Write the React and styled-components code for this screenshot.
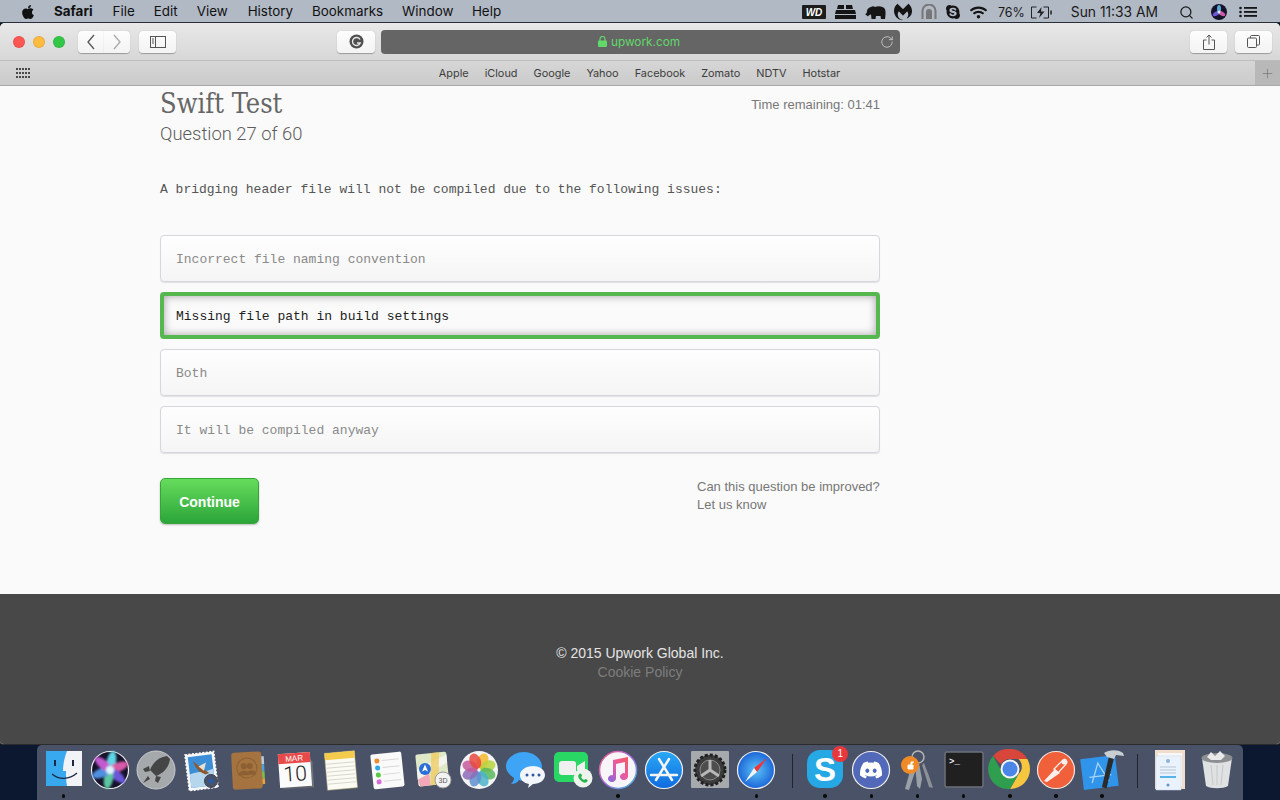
import React from 'react'
import styled, { createGlobalStyle } from 'styled-components'
import { FaApple, FaSkype, FaDiscord, FaWifi } from 'react-icons/fa'
import { SiMalwarebytes } from 'react-icons/si'
import { Search, RotateCw, Plus } from 'lucide-react'

const GlobalStyle = createGlobalStyle`
  html, body { margin: 0; padding: 0; height: 800px; overflow: hidden; background: #0c1830; }
  * { box-sizing: border-box; }
`

const Screen = styled.div`
  width: 1280px;
  height: 800px;
  display: flex;
  flex-direction: column;
  background: #0c1830;
  font-family: "Liberation Sans", Arial, sans-serif;
`

const MenuBar = styled.div`
  height: 23px;
  flex: none;
  display: flex;
  align-items: center;
  padding: 2px 23px 0 20px;
  background: #b1b9c5;
  border-bottom: 1px solid #2a2e38;
  color: #111;
  font-family: Inter, "Liberation Sans", sans-serif;
  font-size: 13.4px;
`

const MenuItem = styled.span`
  margin-left: ${p => p.$gap}px;
  font-weight: ${p => (p.$bold ? 700 : 400)};
  line-height: 1;
`

const MenuSpacer = styled.div`
  flex: 1;
`

const StatusIcons = styled.div`
  display: flex;
  align-items: center;
  gap: 8.6px;
  color: #141414;
`

const StatusItem = styled.span`
  display: flex;
  align-items: center;
  margin-left: ${p => p.$gap}px;
  color: #1a1a1a;
  font-size: ${p => p.$size || 13}px;
`

const Window = styled.div`
  height: 722px;
  flex: none;
  display: flex;
  flex-direction: column;
  border-radius: 5px 5px 4px 4px;
  overflow: hidden;
  border-bottom: 1px solid #2c2c2c;
  background: #fafafa;
`

const Toolbar = styled.div`
  height: 38px;
  flex: none;
  display: flex;
  align-items: center;
  padding: 0 8px 0 13px;
  background: linear-gradient(#e8e8e8, #d7d7d7);
  border-bottom: 1px solid #bdbdbd;
`

const Light = styled.span`
  width: 12px;
  height: 12px;
  margin-right: 8px;
  border-radius: 50%;
  background: ${p => p.$color};
  border: 0.5px solid rgba(0, 0, 0, 0.08);
`

const ToolButton = styled.div`
  width: ${p => p.$w}px;
  height: 22px;
  margin-left: ${p => p.$ml || 0}px;
  flex: none;
  display: flex;
  align-items: center;
  justify-content: center;
  background: linear-gradient(#fdfdfd, #f3f3f3);
  border-radius: ${p => p.$radius || '4px'};
  box-shadow: 0 0.5px 1px rgba(0, 0, 0, 0.3);
`

const UrlBar = styled.div`
  width: 519px;
  height: 24px;
  margin-left: 6px;
  flex: none;
  position: relative;
  display: flex;
  align-items: center;
  justify-content: center;
  gap: 4px;
  padding-right: 3px;
  background: #656565;
  border-radius: 4px;
  color: #62d86a;
  font-family: Inter, "Liberation Sans", sans-serif;
  font-size: 11.8px;
`

const Reload = styled.span`
  position: absolute;
  right: 6px;
  top: 5px;
  display: flex;
  color: #d8d8d8;
`

const BookmarkBar = styled.div`
  height: 25px;
  flex: none;
  display: flex;
  align-items: stretch;
  background: linear-gradient(#d6d6d6, #cbcbcb);
  border-bottom: 1px solid #a9a9a9;
`

const BookmarkEnd = styled.div`
  width: ${p => (p.$end ? 40 : 39)}px;
  flex: none;
  display: flex;
  align-items: center;
  justify-content: ${p => (p.$end ? 'flex-end' : 'flex-start')};
  padding-left: ${p => (p.$end ? 0 : 16)}px;
`

const PlusBox = styled.div`
  width: 25px;
  height: 100%;
  display: flex;
  align-items: center;
  justify-content: center;
  background: #b8b8b8;
  color: #6f6f6f;
`

const Bookmarks = styled.div`
  flex: 1;
  display: flex;
  justify-content: center;
  align-items: center;
  gap: 16px;
  color: #3d3d3d;
  font-family: Inter, "Liberation Sans", sans-serif;
  font-size: 10.9px;
`

const Page = styled.main`
  flex: 1;
  padding: 0 160px;
  background: #fafafa;
`

const Content = styled.div`
  width: 720px;
`

const Header = styled.div`
  display: flex;
  justify-content: space-between;
  align-items: flex-start;
`

const Title = styled.h1`
  margin: 2px 0 0;
  font-family: "DejaVu Serif Condensed", "DejaVu Serif", serif;
  font-weight: 400;
  font-size: 27px;
  line-height: 32px;
  color: #666;
`

const Subtitle = styled.h2`
  margin: 1px 0 0;
  font-family: Roboto, "Liberation Sans", sans-serif;
  font-weight: 300;
  font-size: 18.4px;
  line-height: 26px;
  color: #5d5d5d;
`

const Timer = styled.div`
  margin-top: 10px;
  font-size: 13px;
  line-height: 18px;
  color: #777;
`

const Question = styled.p`
  margin: 34px 0 0;
  font-family: "Liberation Mono", monospace;
  font-size: 13px;
  line-height: 18px;
  color: #555;
`

const Options = styled.div`
  margin-top: 36px;
  display: flex;
  flex-direction: column;
  gap: 10px;
`

const Option = styled.div`
  height: 47px;
  display: flex;
  align-items: center;
  padding: 2px 0 0 ${p => (p.$selected ? 12 : 15)}px;
  font-family: "Liberation Mono", monospace;
  font-size: 13px;
  border-radius: 4px;
  color: ${p => (p.$selected ? '#222' : '#8a8a8a')};
  background: ${p => (p.$selected ? '#fafafa' : 'linear-gradient(#fefefe, #f5f5f5)')};
  border: ${p => (p.$selected ? '4px solid #55b84f' : '1px solid #d6d6dc')};
  box-shadow: ${p => (p.$selected ? 'inset 0 0 9px rgba(0,0,0,0.35)' : '0 1px 1px rgba(0,0,0,0.1)')};
`

const Actions = styled.div`
  margin-top: 25px;
  display: flex;
  justify-content: space-between;
  align-items: flex-start;
`

const ContinueButton = styled.button`
  width: 99px;
  height: 46px;
  padding: 2px 0 0;
  border: 1px solid #35a53a;
  border-radius: 5px;
  background: linear-gradient(#66dc5c, #2ca53a);
  box-shadow: 0 1px 2px rgba(0, 0, 0, 0.25);
  color: #fff;
  font-family: "Liberation Sans", Arial, sans-serif;
  font-size: 14px;
  font-weight: 700;
`

const Improve = styled.div`
  width: 183px;
  font-size: 13px;
  line-height: 18px;
  color: #777;
`

const Footer = styled.footer`
  height: 150px;
  flex: none;
  padding-top: 50px;
  background: #484848;
  text-align: center;
  font-size: 14px;
  line-height: 19px;
  color: #e4e4e4;
`

const FooterLink = styled.div`
  color: #7d7d7d;
`

const Dock = styled.div`
  width: 1206px;
  height: 55px;
  margin-left: 37px;
  padding-left: 3.5px;
  display: flex;
  align-items: flex-start;
  background: #4a5268;
  border-radius: 5px 5px 0 0;
`

const DockSlot = styled.div`
  width: 46.2px;
  height: 55px;
  flex: none;
  position: relative;
  display: flex;
  justify-content: center;
  padding-top: 4px;
  &::after {
    content: '';
    display: ${p => (p.$running ? 'block' : 'none')};
    position: absolute;
    left: 50%;
    bottom: 2.500px;
    width: 3.500px;
    height: 3.500px;
    margin-left: -1.750px;
    border-radius: 50%;
    background: #0b0b0b;
  }
`

const DockDivider = styled.div`
  width: 1px;
  height: 34px;
  flex: none;
  margin: 9px 9.5px 0 12px;
  background: #20242f;
`

const Badge = styled.span`
  position: absolute;
  top: 1px;
  right: 0;
  width: 16px;
  height: 16px;
  border-radius: 50%;
  background: #e8383c;
  color: #fff;
  font-size: 10px;
  line-height: 16px;
  text-align: center;
`

const Glyph = ({ children }) => (
  <svg width="44" height="44" viewBox="0 0 44 44">{children}</svg>
)

const Finder = () => (
  <Glyph>
    <rect x="4" y="2" width="36" height="35" fill="#f1f3f6" />
    <path d="M4 2h21c-3 8-4 14-4 20h3c0 5 0 10 1 15H4z" fill="#39a9ef" />
    <path d="M13 11v6M31 11v6" stroke="#1b2a44" strokeWidth="2" />
    <path d="M10 25c7 6 17 6 25-1" stroke="#1b2a44" strokeWidth="1.300" fill="none" />
  </Glyph>
)

const Siri = () => {
  const petals = [['#5fd6e6', 0], ['#d85aa8', 60], ['#6a58d8', 120], ['#5cc6a0', 180], ['#4f8fe0', 240], ['#c45ad0', 300]]
  return (
    <Glyph>
      <defs>
        <filter id="siriBlur"><feGaussianBlur stdDeviation="1.200" /></filter>
      </defs>
      <circle cx="22" cy="21" r="18.500" fill="#15122a" stroke="#efefef" strokeWidth="1.200" />
      <g filter="url(#siriBlur)">
        {petals.map(([c, a]) => (
          <ellipse key={a} cx="22" cy="12" rx="4.500" ry="10" fill={c} transform={`rotate(${a + 10} 22 21)`} />
        ))}
        <circle cx="22" cy="21" r="4" fill="#dff6fa" />
      </g>
    </Glyph>
  )
}

const Launchpad = () => (
  <Glyph>
    <circle cx="22" cy="21" r="19" fill="#a5a9ab" stroke="#c9cccd" />
    <path d="M33 7c-8 1-14 6-17 14l6 6c8-3 13-9 14-17z" fill="#454545" />
    <path d="M15 17l-6 3 2 3 5-1zM27 28l-3 6-3-2 1-5zM14 27l-5 7 7-4z" fill="#454545" />
  </Glyph>
)

const Mail = () => (
  <Glyph>
    <g transform="rotate(-7 22 22)">
      <rect x="7" y="4" width="29" height="36" fill="#f6f6f6" stroke="#fff" strokeWidth="1.500" strokeDasharray="2 1.500" />
      <rect x="9.500" y="6.500" width="24" height="31" fill="#3c8fd6" />
      <path d="M9.500 24c7-2 16 0 24-3v16.500h-24z" fill="#b6d6ee" />
      <path d="M14 11l6 6 9 8-4 1-6-4-3-5z" fill="#8c5a2f" />
      <path d="M19 17l8-3-3 8z" fill="#e8e0d0" />
    </g>
    <circle cx="31" cy="32" r="6.500" fill="#4a5268" stroke="#3c4355" />
    <circle cx="31" cy="32" r="2.500" fill="#2b58a8" />
  </Glyph>
)

const Contacts = () => (
  <Glyph>
    <g transform="rotate(-3 22 22)">
      <rect x="35" y="8" width="3.500" height="8" fill="#bbccdd" />
      <rect x="35" y="16" width="3.500" height="7" fill="#4ba3d6" />
      <rect x="35" y="23" width="3.500" height="7" fill="#7fbd4e" />
      <rect x="35" y="30" width="3.500" height="6" fill="#e7a33c" />
      <rect x="6" y="3" width="30" height="37" rx="3" fill="#a4733f" />
      <circle cx="21" cy="19" r="10" fill="none" stroke="#8c6033" />
      <circle cx="18" cy="17" r="3" fill="#8c6033" />
      <circle cx="24" cy="17" r="3" fill="#8c6033" />
      <path d="M12 26c1-6 11-6 12 0zM20 26c1-6 10-6 10 0z" fill="#8c6033" />
    </g>
  </Glyph>
)

const CalendarIcon = () => (
  <Glyph>
    <g transform="rotate(-4 22 22)">
      <rect x="9" y="37" width="31" height="3" fill="#5a5f68" />
      <rect x="36" y="13" width="4" height="26" fill="#6d737b" />
      <rect x="6" y="4" width="32" height="34" fill="#fbfbfb" />
      <rect x="6" y="4" width="32" height="10" fill="#e84a4a" />
      <text x="22" y="12" textAnchor="middle" fontFamily="Liberation Sans" fontSize="8" fill="#fff">MAR</text>
      <text x="22" y="32" textAnchor="middle" fontFamily="Roboto" fontWeight="300" fontSize="21" fill="#222">10</text>
    </g>
  </Glyph>
)

const Notes = () => (
  <Glyph>
    <g transform="rotate(-5 22 22)">
      <rect x="7" y="3" width="30" height="37" fill="#fbfbf3" stroke="#b9ad7a" strokeWidth="0.500" />
      <rect x="7" y="3" width="30" height="7" fill="#f4cb4d" />
      <path d="M8 14h28M8 18h28M8 22h28M8 26h28M8 30h28M8 34h28" stroke="#c9c9c0" strokeWidth="0.700" />
    </g>
  </Glyph>
)

const Reminders = () => (
  <Glyph>
    <g transform="rotate(-6 22 22)">
      <rect x="7" y="4" width="31" height="35" rx="2" fill="#fafafa" />
      <circle cx="13" cy="11" r="2.500" fill="#f08a33" />
      <circle cx="13" cy="18" r="2.500" fill="#2aa7ee" />
      <circle cx="13" cy="25" r="2.500" fill="#55c940" />
      <circle cx="13" cy="32" r="2.500" fill="#d66bd9" />
      <path d="M18 11h17M18 18h17M18 25h17M18 32h17" stroke="#d8d8d8" />
    </g>
  </Glyph>
)

const Maps = () => (
  <Glyph>
    <g transform="rotate(-6 22 22)">
      <rect x="6" y="4" width="31" height="32" rx="2" fill="#dfe9c8" />
      <path d="M6 19l31-12v8L6 29z" fill="#f4f4ee" />
      <path d="M22 4h8l-4 32h-8z" fill="#f0c95a" opacity="0.750" />
      <path d="M6 29l12-5v12H8z" fill="#f2a8b8" />
    </g>
    <circle cx="14" cy="20" r="6" fill="#2a6fd8" />
    <path d="M14 15.500l3 7-3-1.500-3 1.500z" fill="#fff" />
    <circle cx="32" cy="31" r="8" fill="#f3f3f3" stroke="#999" />
    <text x="32" y="34" textAnchor="middle" fontFamily="Liberation Sans" fontSize="7" fill="#555">3D</text>
  </Glyph>
)

const Photos = () => {
  const petals = ['#f5b82e', '#b7d33b', '#59b85a', '#4bb4c8', '#5f8fd0', '#8c6bb8', '#c65a9a', '#e8483f']
  return (
    <Glyph>
      <circle cx="22" cy="21" r="19" fill="#f4f4f4" />
      {petals.map((c, i) => (
        <ellipse key={c} cx="22" cy="11.500" rx="5.500" ry="8" fill={c} opacity="0.850" transform={`rotate(${i * 45 + 22} 22 21)`} />
      ))}
    </Glyph>
  )
}

const Messages = () => (
  <Glyph>
    <path d="M21 3c10 0 18 7 18 15s-7 14-17 14c-2 0-4 0-6-1-2 3-5 4-8 4 2-2 3-4 3-6-4-3-8-6-8-12C3 10 11 3 21 3z" fill="#3ea4f5" />
    <path d="M30 17c7 0 12 4 12 9s-5 9-12 9l-5 4 1-4c-5-1-9-4-9-9s6-9 13-9z" fill="#f3f6fb" />
    <circle cx="24" cy="26" r="1.500" fill="#2c5a9c" />
    <circle cx="30" cy="26" r="1.500" fill="#2c5a9c" />
    <circle cx="36" cy="26" r="1.500" fill="#2c5a9c" />
  </Glyph>
)

const FaceTime = () => (
  <Glyph>
    <rect x="4" y="3" width="34" height="30" rx="5" fill="#29d765" />
    <rect x="9" y="12" width="17" height="14" rx="3" fill="#f0f0f0" />
    <path d="M27 17l8-5v14l-8-5z" fill="#f0f0f0" />
    <circle cx="33" cy="29" r="9.500" fill="#eef3ee" />
    <path d="M29.500 25c1-1 2 0 2.500 1.500 0 1-1 1-.7 2 .5 1 1.500 2 2.500 2.300 1 .2 1-.8 2-.8 1.500.5 2.300 1.500 1.500 2.500-1 1.500-3 1.500-5 .2-2.500-1.500-4.500-4.500-4-6.200 0-.6.700-1.200 1.200-1.500z" fill="#29b34f" />
  </Glyph>
)

const Music = () => (
  <Glyph>
    <defs>
      <linearGradient id="noteG" x1="0" y1="1" x2="1" y2="0"><stop offset="0" stopColor="#7d6ae0" /><stop offset="0.500" stopColor="#e85aa8" /><stop offset="1" stopColor="#f55a60" /></linearGradient>
      <linearGradient id="ringG" x1="0" y1="0" x2="1" y2="1"><stop offset="0" stopColor="#f45b7e" /><stop offset="0.500" stopColor="#a66be0" /><stop offset="1" stopColor="#3ac0e0" /></linearGradient>
    </defs>
    <circle cx="22" cy="21" r="18.500" fill="#f7f5f7" stroke="url(#ringG)" strokeWidth="1.500" />
    <path d="M17 11l15-3v19.500a4 3.500 0 1 1-3-3.300V13l-9 2v14.500a4 3.500 0 1 1-3-3.300z" fill="url(#noteG)" />
  </Glyph>
)

const AppStore = () => (
  <Glyph>
    <defs>
      <linearGradient id="storeG" x1="0" y1="0" x2="0" y2="1"><stop offset="0" stopColor="#29a8f5" /><stop offset="1" stopColor="#0f6be0" /></linearGradient>
    </defs>
    <circle cx="22" cy="21" r="18.500" fill="url(#storeG)" stroke="#f2f2f2" strokeWidth="1.200" />
    <path d="M17 10l13 21M27 10L14 31M9 26h26" stroke="#f5f5f5" strokeWidth="2.500" strokeLinecap="round" />
  </Glyph>
)

const Prefs = () => (
  <Glyph>
    <rect x="3" y="2" width="38" height="37" rx="1" fill="#a6aaad" />
    <circle cx="22" cy="21" r="15" fill="#3c3c3c" />
    <circle cx="22" cy="21" r="15" fill="none" stroke="#202020" strokeWidth="3" strokeDasharray="3 2" />
    <circle cx="22" cy="21" r="10" fill="#4d4d4d" stroke="#8a8a8a" />
    <path d="M22 21V11M22 21l-9 6M22 21l9 6" stroke="#b8b8b8" strokeWidth="3" />
  </Glyph>
)

const SafariIcon = () => (
  <Glyph>
    <defs>
      <radialGradient id="safariG"><stop offset="0" stopColor="#5cc3f7" /><stop offset="1" stopColor="#1c66d8" /></radialGradient>
    </defs>
    <circle cx="22" cy="21" r="18.500" fill="url(#safariG)" stroke="#f0f0f0" strokeWidth="1.200" />
    <path d="M33 9L20 19l3 4z" fill="#f2353b" />
    <path d="M11 33l9-14 3 4z" fill="#f4f4f4" />
  </Glyph>
)

const SkypeIcon = () => (
  <Glyph>
    <rect x="4" y="1" width="36" height="38" rx="13" fill="#25a8e4" />
    <text x="22" y="32" textAnchor="middle" fontFamily="Liberation Sans" fontWeight="700" fontSize="33" fill="#fff">S</text>
  </Glyph>
)

const DiscordIcon = () => (
  <Glyph>
    <circle cx="22" cy="21" r="18.500" fill="#5268b8" stroke="#f0f0f0" strokeWidth="1.200" />
    <g transform="translate(10 9)"><FaDiscord size={24} color="#fff" /></g>
  </Glyph>
)

const Keychain = () => (
  <Glyph>
    <circle cx="23" cy="8" r="6" fill="none" stroke="#b5b5b5" strokeWidth="1.500" />
    <path d="M24 14l3 16-2 10-3-3-2-22z" fill="#9aa0a6" />
    <path d="M29 14l5 13 4 12-4-1-7-22z" fill="#8b9197" />
    <path d="M15 22l-5 18 4 1 6-18z" fill="#9aa0a6" />
    <circle cx="15" cy="16" r="9" fill="#f08a26" />
    <path d="M13 16h5v4h-5zM16 16v-3h3" fill="#fff" stroke="#fff" />
  </Glyph>
)

const Terminal = () => (
  <Glyph>
    <rect x="3" y="3" width="38" height="35" rx="2" fill="#202020" stroke="#6c7078" strokeWidth="1.500" />
    <text x="7" y="15" fontFamily="Liberation Mono" fontWeight="700" fontSize="9" fill="#eee">&gt;_</text>
  </Glyph>
)

const Chrome = () => (
  <Glyph>
    <path d="M22 0a20 20 0 0 1 17.300 10H22a10 10 0 0 0-9 5.500L5 7A20 20 0 0 1 22 0z" fill="#d8453a" />
    <path d="M39.300 10A20 20 0 0 1 22 40l8.500-15a10 10 0 0 0 0-15z" fill="#f6c63e" />
    <path d="M5 7l8.500 15A10 10 0 0 0 30.500 25L22 40A20 20 0 0 1 5 7z" fill="#2f9e4f" />
    <circle cx="22" cy="20" r="9.500" fill="#f4f4f4" />
    <circle cx="22" cy="20" r="7.500" fill="#4a86e8" />
  </Glyph>
)

const Postman = () => (
  <Glyph>
    <circle cx="22" cy="21" r="18.500" fill="#f0603a" stroke="#f5e6e0" strokeWidth="1.200" />
    <path d="M10 32l11-12 5 4-13 9z" fill="#f8f0ec" />
    <path d="M20 20l9-9c3-2 5 2 3 4l-8 9z" fill="none" stroke="#f8f0ec" strokeWidth="1.300" />
    <circle cx="30" cy="13" r="2.500" fill="#f8f0ec" />
  </Glyph>
)

const Xcode = () => (
  <Glyph>
    <g transform="rotate(-7 20 24)">
      <rect x="2" y="8" width="35" height="31" fill="#2f94ea" />
      <path d="M11 33l8-19 9 19M9 27h22" stroke="#a7d4f7" strokeWidth="1.300" fill="none" />
    </g>
    <path d="M29 7l-7 31 4.500 1.500L34 9z" fill="#2b2b2b" />
    <path d="M24 4c5-3 13-4 19 0l1 3-8-1-2 4-7-2z" fill="#c9ced2" />
  </Glyph>
)

const PreviewDoc = () => (
  <Glyph>
    <rect x="6" y="1" width="30" height="39" fill="#f0ddce" />
    <rect x="9" y="4" width="24" height="33" fill="#f7f7f7" />
    <rect x="7" y="7" width="25" height="34" fill="#eaf2fb" stroke="#c7d4e2" strokeWidth="0.500" />
    <circle cx="19" cy="12" r="2" fill="#8db1d8" />
    <path d="M11 18h16M11 21h16M11 24h16" stroke="#b8c7d8" />
    <rect x="11" y="27" width="16" height="2" fill="#57b3ea" />
    <circle cx="19" cy="36" r="1.500" fill="#6a93c8" />
  </Glyph>
)

const Trash = () => (
  <Glyph>
    <path d="M7 9l4 28c5 3 17 3 22 0l4-28z" fill="#dfe1e2" />
    <ellipse cx="22" cy="9" rx="15.500" ry="5" fill="#8c8f92" />
    <path d="M12 8l4-5 4 4 5-5 5 5-4 4h-10z" fill="#e9e9e9" />
    <path d="M16 16l2 20M22 16v20M28 16l-2 20" stroke="#c5c7c9" />
  </Glyph>
)

const BackArrow = ({ muted }) => (
  <svg width="10" height="16" viewBox="0 0 10 16" fill="none" stroke={muted ? '#a8a8a8' : '#555'} strokeWidth="1.300">
    {muted ? <path d="M2 1l6 7-6 7" /> : <path d="M8 1L2 8l6 7" />}
  </svg>
)

const SidebarIcon = () => (
  <svg width="16" height="12" viewBox="0 0 16 12" fill="none" stroke="#555">
    <rect x="0.500" y="0.500" width="15" height="11" />
    <path d="M5.500 0.500v11" />
    <path d="M2 3h2M2 5h2M2 7h2" />
  </svg>
)

const ShareIcon = () => (
  <svg width="12" height="16" viewBox="0 0 12 16" fill="none" stroke="#555">
    <path d="M3.500 6H.5v9.500h11V6h-3" />
    <path d="M6 10.500V1M3.500 3.500L6 1l2.500 2.500" />
  </svg>
)

const TabsIcon = () => (
  <svg width="13" height="13" viewBox="0 0 13 13" fill="none" stroke="#555">
    <rect x="0.500" y="3" width="9" height="9.500" rx="1" />
    <path d="M3.500 3V1.500a1 1 0 0 1 1-1h7a1 1 0 0 1 1 1V9a1 1 0 0 1-1 1H9.500" />
  </svg>
)

const LockIcon = () => (
  <svg width="9" height="11" viewBox="0 0 9 11">
    <rect y="4.500" width="9" height="6.500" rx="1" fill="#62d86a" />
    <path d="M2 5V3a2.500 2.500 0 0 1 5 0v2" fill="none" stroke="#62d86a" strokeWidth="1.200" />
  </svg>
)

const GrammarlyIcon = () => (
  <svg width="15" height="15" viewBox="0 0 15 15">
    <circle cx="7.500" cy="7.500" r="7" fill="#4e4e4e" />
    <path d="M11 5.500A4 4 0 1 0 11.200 9H8" fill="none" stroke="#e8e8e8" strokeWidth="1.400" />
  </svg>
)

const TopSitesIcon = () => (
  <svg width="15" height="11" viewBox="0 0 15 11" fill="#4a4a4a">
    {[0, 4, 8].map(y => [0, 3, 6, 9, 12].map(x => <rect key={`${x}-${y}`} x={x} y={y} width="2" height="2" />))}
  </svg>
)

const WdIcon = () => (
  <svg width="24" height="15" viewBox="0 0 24 15">
    <rect width="24" height="14" rx="1" fill="#1c1c1c" />
    <text x="12" y="11" textAnchor="middle" fontFamily="Liberation Sans" fontWeight="700" fontStyle="italic" fontSize="10" fill="#fff">WD</text>
  </svg>
)

const DriveIcon = () => (
  <svg width="21" height="14" viewBox="0 0 21 14" fill="#151515">
    <path d="M3 0h6v4H2zM11 0h6l1 4h-7zM1 5h19l1 4H0zM0 10h21v4H0z" />
  </svg>
)

const ElephantIcon = () => (
  <svg width="21" height="15" viewBox="0 0 21 15" fill="#151515">
    <path d="M6 2c2-1.500 3-.5 4 0 4-1.500 8-.5 10 2 1 3 .5 7 0 10h-4l-.5-3h-4.500l-.5 3H6.500L6 9.500c-1.500 0-2.500 1-3 2L0 9c1.500 0 2-1.500 2-3 0-2 2-3.500 4-4z" />
  </svg>
)

const VaultIcon = () => (
  <svg width="16" height="16" viewBox="0 0 16 16" fill="none" stroke="#777">
    <path d="M1.500 15V7a6.500 6.500 0 0 1 13 0v8" strokeWidth="2" />
    <path d="M5 15V8a3 3 0 0 1 6 0v7z" fill="#777" stroke="none" />
  </svg>
)

const BatteryIcon = () => (
  <svg width="23" height="13" viewBox="0 0 22 13" fill="none" stroke="#222">
    <path d="M6 1H1v11h5M13 1h5v11h-5" />
    <path d="M20.500 4.500v4" strokeWidth="1.500" />
    <path d="M11 1L6.500 7H10l-1.500 5L14 5.500h-3.500z" fill="#222" stroke="none" />
  </svg>
)

const SiriSmall = () => (
  <svg width="16" height="16" viewBox="0 0 16 16">
    <circle cx="8" cy="8" r="8" fill="#15132a" />
    <ellipse cx="8" cy="5" rx="2" ry="4" fill="#5aa8d8" />
    <ellipse cx="8" cy="5" rx="2" ry="4" fill="#d05aa8" transform="rotate(120 8 8)" />
    <ellipse cx="8" cy="5" rx="2" ry="4" fill="#6a58d8" transform="rotate(240 8 8)" />
    <circle cx="8" cy="8" r="1.500" fill="#d5f2f7" />
  </svg>
)

const ListIcon = () => (
  <svg width="18" height="12" viewBox="0 0 18 12" fill="#151515">
    <circle cx="1.500" cy="2" r="1.300" /><rect x="5" y="1" width="13" height="1.800" />
    <circle cx="1.500" cy="6" r="1.300" /><rect x="5" y="5" width="13" height="1.800" />
    <circle cx="1.500" cy="10" r="1.300" /><rect x="5" y="9" width="13" height="1.800" />
  </svg>
)

const menus = [
  ['File', 20], ['Edit', 19], ['View', 19], ['History', 20], ['Bookmarks', 19], ['Window', 19], ['Help', 18.500],
]

const links = ['Apple', 'iCloud', 'Google', 'Yahoo', 'Facebook', 'Zomato', 'NDTV', 'Hotstar']

const answers = [
  'Incorrect file naming convention',
  'Missing file path in build settings',
  'Both',
  'It will be compiled anyway',
]

const dockLeft = [
  [Finder, true], [Siri], [Launchpad], [Mail], [Contacts], [CalendarIcon], [Notes], [Reminders],
  [Maps], [Photos], [Messages], [FaceTime], [Music, true], [AppStore], [Prefs], [SafariIcon, true],
]

const dockMiddle = [
  [DiscordIcon, true], [Keychain, true], [Terminal, true], [Chrome, true], [Postman, true], [Xcode, true],
]

const App = () => (
  <Screen>
    <GlobalStyle />
    <MenuBar>
      <FaApple size={16} />
      <MenuItem $gap={18} $bold>Safari</MenuItem>
      {menus.map(([name, gap]) => <MenuItem key={name} $gap={gap}>{name}</MenuItem>)}
      <MenuSpacer />
      <StatusIcons>
        <WdIcon />
        <DriveIcon />
        <ElephantIcon />
        <SiMalwarebytes size={18} />
        <VaultIcon />
        <FaSkype size={16} />
        <FaWifi size={17} />
      </StatusIcons>
      <StatusItem $gap={11} $size={12.500}>76%</StatusItem>
      <StatusItem $gap={5}><BatteryIcon /></StatusItem>
      <StatusItem $gap={18} $size={13.800}>Sun 11:33 AM</StatusItem>
      <StatusItem $gap={21}><Search size={15} /></StatusItem>
      <StatusItem $gap={17}><SiriSmall /></StatusItem>
      <StatusItem $gap={12}><ListIcon /></StatusItem>
    </MenuBar>

    <Window>
      <Toolbar>
        <Light $color="#fc5753" />
        <Light $color="#fdbc40" />
        <Light $color="#33c748" />
        <ToolButton $w={26} $ml={5} $radius="4px 0 0 4px"><BackArrow /></ToolButton>
        <ToolButton $w={26} $radius="0 4px 4px 0"><BackArrow muted /></ToolButton>
        <ToolButton $w={37} $ml={9}><SidebarIcon /></ToolButton>
        <ToolButton $w={38} $ml={161}><GrammarlyIcon /></ToolButton>
        <UrlBar>
          <LockIcon />
          upwork.com
          <Reload><RotateCw size={14} strokeWidth={1.300} /></Reload>
        </UrlBar>
        <ToolButton $w={37} $ml={290}><ShareIcon /></ToolButton>
        <ToolButton $w={37} $ml={8}><TabsIcon /></ToolButton>
      </Toolbar>
      <BookmarkBar>
        <BookmarkEnd><TopSitesIcon /></BookmarkEnd>
        <Bookmarks>{links.map(l => <span key={l}>{l}</span>)}</Bookmarks>
        <BookmarkEnd $end><PlusBox><Plus size={15} strokeWidth={1} /></PlusBox></BookmarkEnd>
      </BookmarkBar>
      <Page>
        <Content>
          <Header>
            <div>
              <Title>Swift Test</Title>
              <Subtitle>Question 27 of 60</Subtitle>
            </div>
            <Timer>Time remaining: 01:41</Timer>
          </Header>
          <Question>A bridging header file will not be compiled due to the following issues:</Question>
          <Options>
            {answers.map((a, i) => <Option key={a} $selected={i === 1}>{a}</Option>)}
          </Options>
          <Actions>
            <ContinueButton>Continue</ContinueButton>
            <Improve>Can this question be improved?<br />Let us know</Improve>
          </Actions>
        </Content>
      </Page>
      <Footer>
        © 2015 Upwork Global Inc.
        <FooterLink>Cookie Policy</FooterLink>
      </Footer>
    </Window>

    <Dock>
      {dockLeft.map(([Icon, running], i) => <DockSlot key={i} $running={running}><Icon /></DockSlot>)}
      <DockDivider />
      <DockSlot $running><SkypeIcon /><Badge>1</Badge></DockSlot>
      {dockMiddle.map(([Icon, running], i) => <DockSlot key={i} $running={running}><Icon /></DockSlot>)}
      <DockDivider />
      <DockSlot><PreviewDoc /></DockSlot>
      <DockSlot><Trash /></DockSlot>
    </Dock>
  </Screen>
)

export default App
